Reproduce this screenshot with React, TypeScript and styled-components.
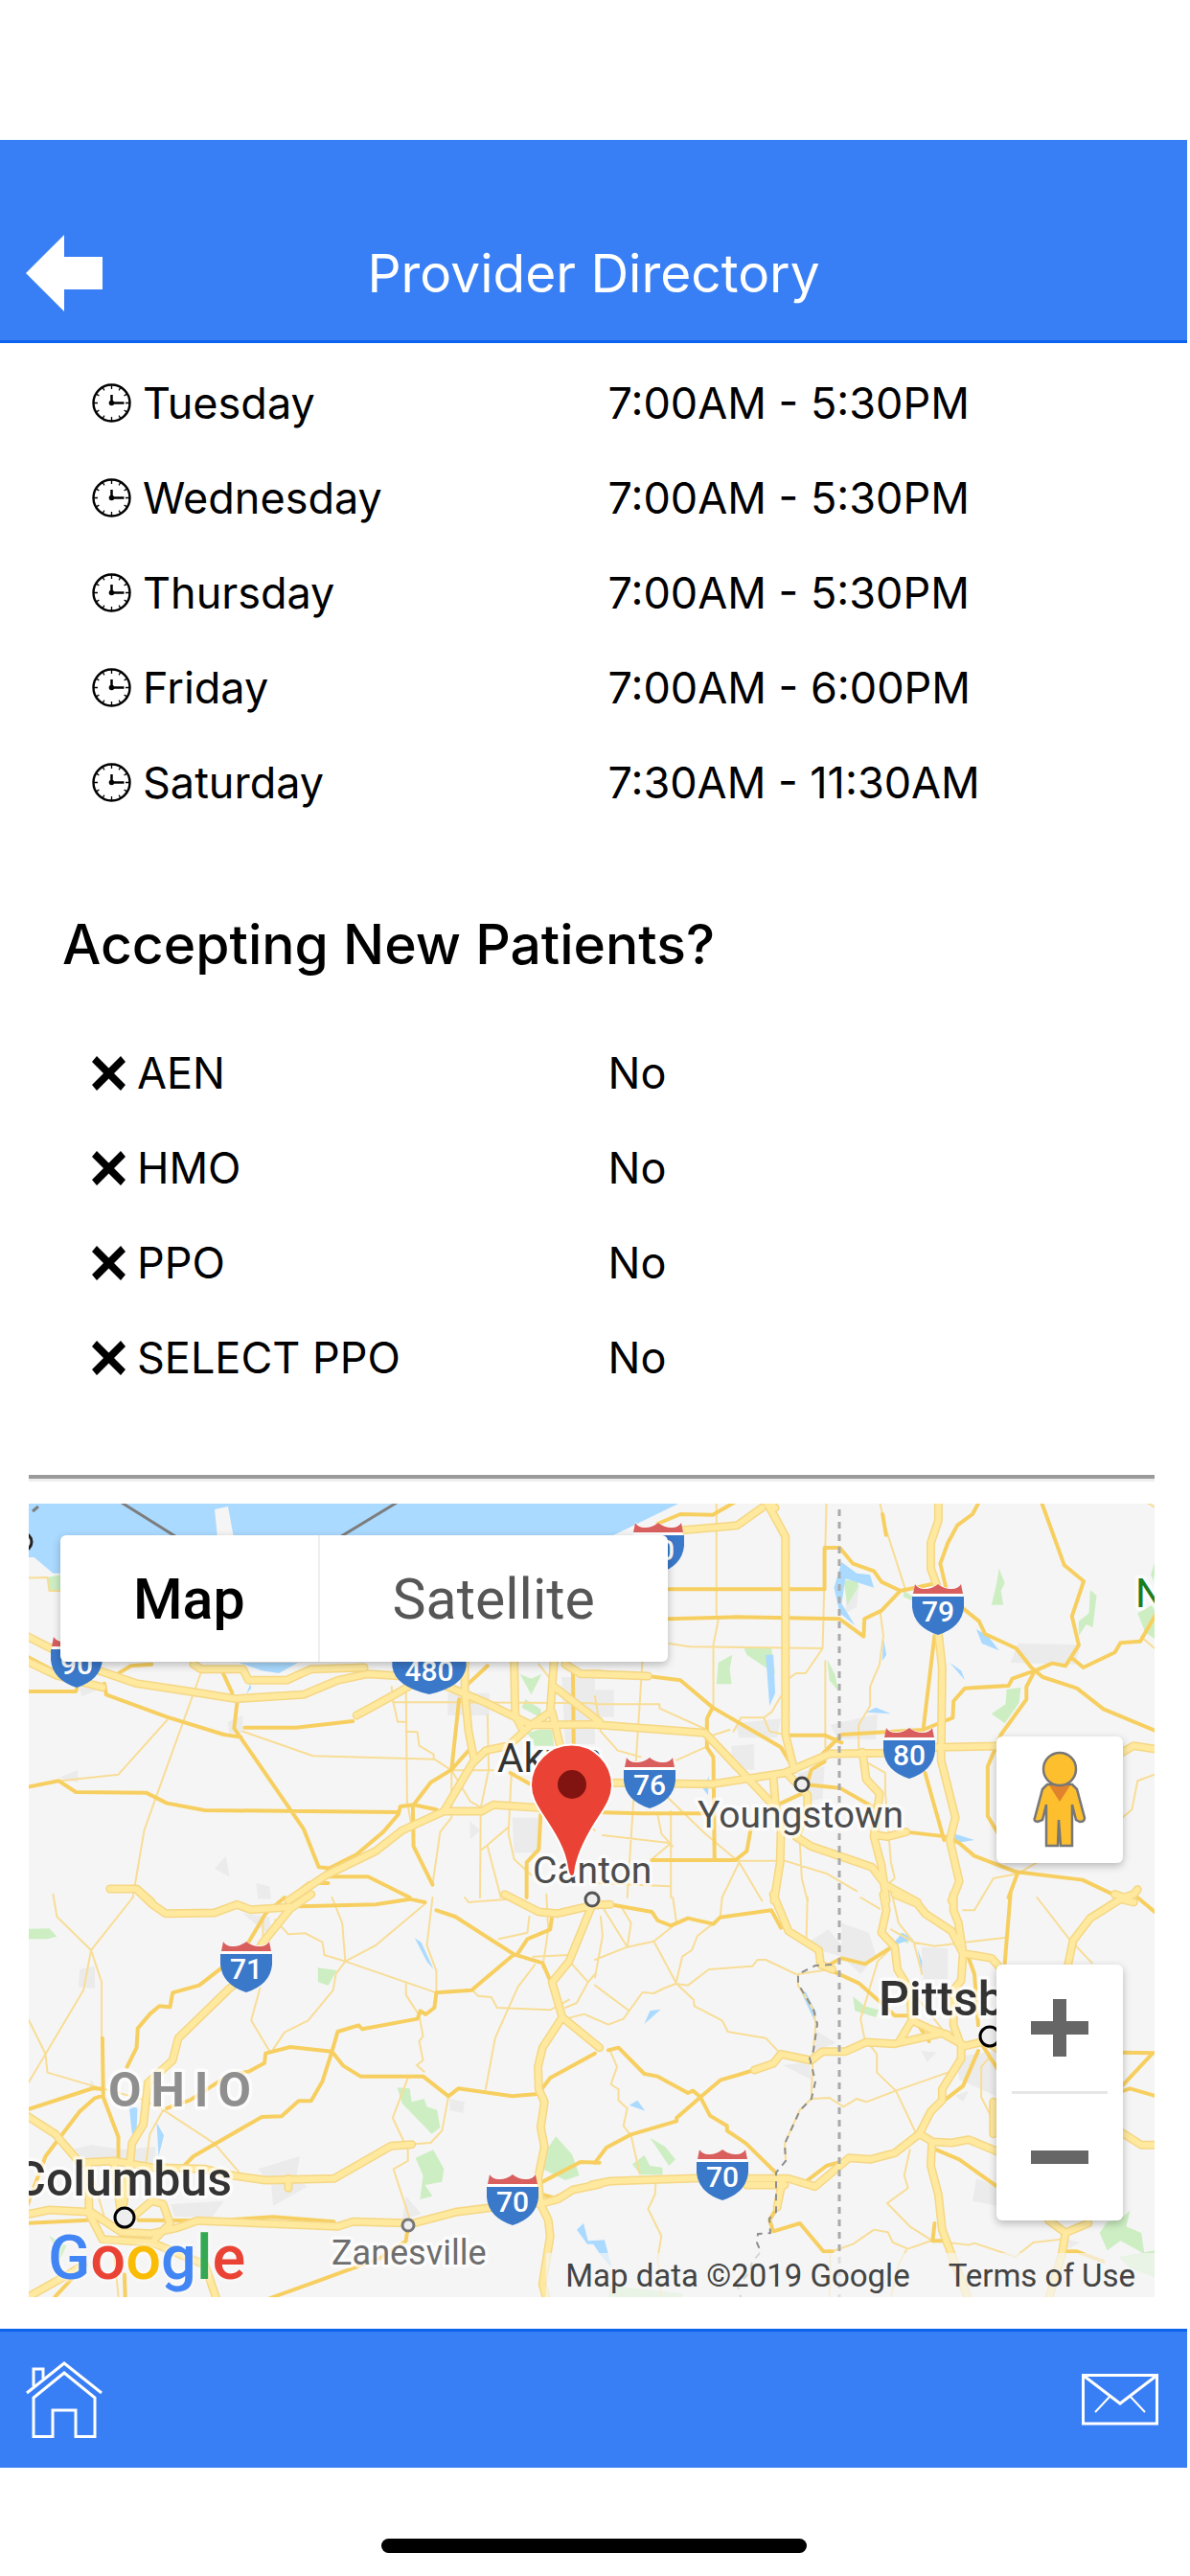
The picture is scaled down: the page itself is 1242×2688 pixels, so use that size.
import React, { memo, ReactElement, useState } from 'react';
import styled, { createGlobalStyle } from 'styled-components';

const HOURS = [
  { day: 'Tuesday', time: '7:00AM - 5:30PM' },
  { day: 'Wednesday', time: '7:00AM - 5:30PM' },
  { day: 'Thursday', time: '7:00AM - 5:30PM' },
  { day: 'Friday', time: '7:00AM - 6:00PM' },
  { day: 'Saturday', time: '7:30AM - 11:30AM' },
];

const PLANS = [
  { name: 'AEN', accepting: false },
  { name: 'HMO', accepting: false },
  { name: 'PPO', accepting: false },
  { name: 'SELECT PPO', accepting: false },
];

interface Tile {
  transform: string;
  water: string;
  park: string;
  urban: string;
  minor: string;
  primary: string;
  motorway: string;
}

// The base map is four tiles, every tile has its own coordinate space
const TILES: Tile[] = [
  {
    transform: 'matrix(0.396 0 0 0.3333 -30 -9)',
    water:
      'M70 20H1580V180H160V245H140L90 195H70Z M630 525H785L735 558L690 550Z M660 590L662 605L650 622Z',
    park:
      'M125 258L160 250V300H132Z M1370 560L1400 575L1428 560L1400 625Z M1385 640L1425 670L1428 700L1375 665Z M1390 745L1420 735H1455L1460 785H1410Z',
    urban:
      'M155 885L205 860V900Z M565 1170L595 1130L605 1195Z M675 1215L710 1225L715 1265H680Z M1180 620H1290V690H1180Z M600 710L640 690V745H605Z M1350 1010H1420V1120H1355Z M1238 1020L1265 1050L1240 1078Z M1480 570H1568V780H1490Z M210 600L260 610L215 630Z',
    minor:
      'M530 555L410 950L380 1050L350 1260 M440 705L312 875L160 895 M640 740L825 817L1145 827L1190 862H1300 M1070 600L1073 960L1087 1050 M1032 600L1035 640L1048 710H1070 M1070 740L1100 742L1105 785L1143 812V827 M1035 648L1568 652 M1285 690L1288 860L1267 980L1265 1260 M1190 862V1010L1160 1055L1140 1220 M1190 862L1240 960L1270 980 M1348 870L1340 1060L1355 1140L1400 1190 M1340 1040L1270 1110 M1285 1100L1320 1260 M70 260L125 258L130 300H160 M1420 530L1500 650L1568 700 M1500 990L1568 1050',
    primary:
      'M70 505L150 555 M70 615H200L205 595 M275 590L280 625L440 695L590 750L635 758 M625 650L617 730L800 1045L840 1165L880 1170 M585 550L612 620 M645 728H780L930 708 M70 915L155 895L200 930L385 932L440 965L540 987L1050 993 M1210 640L1190 860L1135 900L1090 970L1150 985 M1235 800L1190 860 M1090 970L1055 975L1050 1000L1010 1055L940 1125L865 1170L860 1195L970 1195L1080 1260 M1088 970L1090 1100L1140 1220 M1510 540L1512 780 M1425 1000L1420 1110L1388 1150V1260 M310 560L345 535L400 530 M760 1265L815 1215H865 M1235 590L1285 535 M1345 870L1420 920',
    motorway:
      'M60 435L150 490L250 545L360 590L500 615L620 638L800 625L890 580L970 560L1100 570 M70 520L150 565L270 602 M510 530L530 545H640L655 580H755L820 545L960 540 M940 690L1040 625L1090 590L1220 560 M1180 600L1280 650L1400 720L1580 718 M1225 520V620L1235 740L1250 830L1170 990L1060 1050L990 1115L860 1190L760 1270 M1170 990H1270L1300 970L1430 980 M1355 520L1358 690L1375 730 M1460 520L1450 680L1400 720L1340 785L1280 800L1245 840 M1460 600L1580 710 M1490 530L1530 560H1580 M1455 680L1475 780 M290 1233H360L400 1275',
  },
  {
    transform: 'matrix(0.396 0 0 0.3333 591 -9)',
    water:
      'M-10 20H232L50 125L-10 180Z M650 210L690 245L725 250L735 290L660 262L650 340L685 408L645 370L630 290Z M450 500H470L475 620L460 660Z M1005 420L1035 440L1065 487L1020 465Z M935 525L965 550L975 580Z M760 450L768 500L757 520Z M715 680L740 665L780 685Z M945 1060L1000 1080L950 1090Z M285 920L300 880L298 940Z',
    park:
      'M393 480H465L475 560L400 500Z M325 525L362 500L355 545L360 592H320Z M612 515L632 560L642 615L618 580Z M1065 230L1080 275L1070 300L1076 344H1045L1058 280Z M1305 297L1322 315L1312 415L1295 405L1275 440V395L1302 370Z M1085 608L1122 603L1118 650L1080 715L1045 685L1082 655Z M1475 210L1465 250L1475 280Z M1430 370L1475 340V450L1450 430Z M655 265L690 270L695 285L665 345Z M815 300L840 320L835 330L812 318Z',
    urban:
      'M665 285H695L690 350L660 370Z M1095 525L1115 465L1280 468L1265 530Z M620 720L745 685L740 765H640Z M360 785L420 780V860H360Z M370 715L490 700L480 760H380Z M0 610H50V695H0Z M535 870L605 850L600 950L560 960Z',
    minor:
      'M320 20V380L325 390L312 470V660 M610 20L600 480L555 558H530L505 580 M195 465L250 475L600 480 M607 520V790 M752 370L760 440L750 530L725 600V660L695 720V800 M125 520L85 1260 M0 655H170V668L295 735 M365 740L385 697H445L460 740L500 750 M200 990V1260 M20 1065L200 1090L150 1140 M380 1150L335 1260 M380 1150L440 1270 M500 1145L610 1185L690 1240 M540 1090L545 1200L560 1270 M1475 875L1430 895L1415 985L1390 1010 M1450 20L1475 38 M1440 445L1475 480 M290 790L215 830 M750 20L765 100L818 295 M720 840L765 870V930L780 1150L790 1200L760 1230 M165 1000L175 1060L205 1100 M190 945L290 1060L380 1150 M0 630L15 740L60 800L120 820 M1165 1150L1115 1185L1050 1200L1020 1260 M0 1215L200 1225 M490 630L465 680L445 697 M355 735L290 760 M370 1145H500',
    primary:
      'M165 90L225 60L310 62L372 20 M195 295H605V165H645L680 215L735 238L755 272L805 300L885 280 M195 388L370 382L645 388L708 443L710 388L755 362L805 300 M1013 20L995 60L955 95L930 150L910 215L925 290 M758 60L767 125 M1176 20L1237 220L1288 270L1257 380L1275 470L1240 535L1205 527L1170 545L1100 575L1090 597L975 605L945 645L943 697L865 735L650 750L600 810L605 835L570 860L560 900 M970 355L1012 395L1028 435L1110 480L1150 540L1180 570L1270 605L1340 670L1475 737 M1257 510L1287 540L1370 493L1385 463L1437 458L1480 370 M1155 560L1137 600V640L1070 750L1035 850V1005L1065 1065 M140 567L225 580L310 665L490 790L520 850 M310 665L295 700V790L312 820L315 1140 M505 752H605L650 775 M895 440L865 735 M870 870L920 1080 M545 905L645 917L745 985 M820 1055L930 1070L960 1090L1000 1130L1110 1180L1285 1205L1400 1270 M0 993L120 997H290 M150 1143H370L400 1115L410 1050 M1115 1180L1090 1260 M490 965L545 935',
    motorway:
      'M450 20L470 60L502 130V750L525 860 M440 40L375 95L230 110L130 160 M-10 560L140 567 M-10 718L290 745L465 965 M-10 900L310 905L500 870L620 810L770 808L900 790L1100 785 M1380 812L1420 785L1485 797 M905 20V80L885 150V230L900 280 M905 430L915 540L912 830L950 1010L935 1080L960 1210L940 1270 M470 880L475 960L490 1050L488 1150L472 1270 M505 870L560 940V980L530 1070L570 1100L730 1165L765 1220L850 1275 M705 805L715 890L750 935L735 1070L755 1160L768 1270 M745 1065L770 1070L820 1055 M455 25L475 40 M1370 1250L1395 1260L1420 1250L1430 1235',
  },
  {
    transform: 'matrix(0.396 0 0 0.3333 -30 411)',
    water:
      'M340 650L362 660L360 730L348 740Z M413 705L432 745L418 810Z M1093 127L1110 140L1143 225L1125 200Z M1520 1040L1538 1020L1550 1075L1568 1075V1085H1548Z',
    park:
      'M70 98L130 97L150 122L125 130H70Z M838 220L888 228L865 275L838 265Z M1047 595L1080 598L1085 640L1118 630L1125 655L1152 665L1160 720L1138 740L1060 645Z M1095 815L1142 790L1170 850L1165 890L1120 900L1140 935L1107 945L1115 870Z M1465 748L1508 805L1527 870L1490 885L1430 850L1435 800Z M130 1060L175 1090L160 1130Z',
    urban:
      'M210 225L250 215V285L207 280Z M640 50L710 60L715 120L680 90Z M790 810L780 880L810 905L720 965L715 900L680 850Z M185 790L240 775L330 790L410 780V830H220Z M450 960L590 950L560 1000H460Z M1185 630L1225 640L1220 675L1185 665Z M1070 935L1110 990L1060 1010Z M240 570L250 590L235 600Z',
    minor:
      'M140 -10L150 60L240 165L268 265V440 M350 0L240 165L220 290L120 490L70 590 M70 370L120 490L125 548L245 590L370 630L430 665L565 770L630 860 M430 665L395 740L385 830 M725 70L760 115L805 112L850 140L855 180L910 200L1150 298 M875 0L902 80L910 200L885 240L878 290L812 385L750 422L720 475 M1120 20L990 150L910 200 M685 285L662 385L710 480 M1140 0L1125 150L1150 230V298 M1070 270V305L1105 370L1115 435L1105 450L1115 510L1098 525L1118 545 M1075 565L1035 690L1075 790V825L1037 850L1078 1000 M1182 622L1165 730L1135 768L1090 772 M1410 210L1365 280L1305 440L1280 600 M1245 290L1260 308L1295 312L1310 345L1450 352L1500 320 M1395 60L1390 110L1315 130 M1405 185L1500 180 M1440 -10L1445 100L1430 220 M1490 380L1540 365L1568 380 M1505 205L1550 265L1520 330L1490 345 M1550 265L1568 240 M300 1100L312 1250 M245 880L275 1000 M693 60V120 M1225 0L1235 15L1340 5',
    primary:
      'M790 28L990 22L1080 5L1120 15 M750 0L700 50L655 140 M590 215L525 275L455 298L448 343L420 340L395 365L363 410L360 470L335 530 M440 660L500 635L605 555L655 545L697 518L700 488L765 468L875 482L890 420L945 400L955 412L1100 380L1108 355L1122 366L1145 345L1150 298L1243 290L1355 178L1200 60L1150 40 M1355 178L1430 205L1450 260 M1365 175L1390 130L1450 100L1455 60 M875 482L905 527L950 560H1115L1182 622L1208 598L1350 622L1418 615L1450 565L1568 488 M875 482L850 575L820 637H787L742 685L690 687L510 810L485 840 M70 665L245 597L272 600L270 440 M272 620L250 628L210 670L120 810L70 970 M272 600V625L312 750V820 M365 1010L560 1012L720 1000L880 1015 M1075 1030L1070 1075L1000 1130L840 1200L710 1255 M1430 890L1530 828L1580 830 M1430 930L1460 940L1490 925 M70 1020L230 1010 M145 1250L200 1180 M328 1180L330 1250',
    motorway:
      'M365 -20L400 20L437 50L565 48L625 22L660 38L765 30 M820 -10L765 35L690 145L650 240L600 290L470 440L455 510L390 580L378 710L348 770L342 840 M60 675L145 740L210 830L300 825L400 845L540 850L620 872L700 885L880 880L1030 778L1085 773 M760 880V910 M60 995L130 978L240 985L320 1048L400 1052L465 1035L520 1012L890 1030L930 1015L1090 1020L1200 985L1300 970 M1420 960L1470 945L1510 915L1580 898 M232 840L235 990L270 1070L400 1080L448 1020L430 960L400 950L340 1010 M60 1260L180 1180L220 1150 M400 1080L540 1150L570 1255 M1330 -10L1420 45L1470 50L1560 25L1500 200L1455 265L1482 375L1430 470L1418 530L1420 600L1435 640L1425 720L1435 780L1418 880L1425 960L1445 1010L1450 1060L1430 1210L1440 1255 M320 1000L300 830 M340 840L325 960 M1482 375L1580 470',
  },
  {
    transform: 'matrix(0.396 0 0 0.3333 591 411)',
    water:
      'M130 395L145 355L173 350L150 375Z M90 650L112 635L132 668Z M-10 1075L25 1072L45 1160L15 1120Z M545 300L555 295L583 360L580 390Z M760 180L810 110L838 130L800 145Z M850 160L862 200V240Z',
    park:
      'M145 752L185 780L212 820L195 840Z M98 835L130 807L145 840L178 845V868H120Z M680 310L710 340L748 352L740 375L685 355Z M1410 980L1400 1030L1440 1050L1448 1115L1385 1075L1350 1105L1330 1050L1350 1015L1380 1010Z M1380 1125L1475 1105V1190L1410 1160Z M40 1215L230 1240V1255H35Z M805 110L830 120L825 145L800 130Z',
    urban:
      'M550 150L615 100L650 150V80L722 110L740 180L700 240L650 185Z M860 155L930 160V255H865Z M495 525L565 515L570 570Z M580 415L635 455L580 480Z M860 480L900 485L875 515Z M950 500L1055 480V620L960 570Z M1005 880L1060 900V965L995 950Z M950 620L985 605L970 640Z M1245 1070L1280 1080L1245 1100Z',
    minor:
      'M15 60L20 120L0 250 M20 30L85 155L155 137L205 90 M85 155L0 195 M70 30L95 80L85 155 M155 137L215 270L260 320L262 340L335 385L350 420L450 440L490 490 M205 0L215 80 M335 0L330 60 M310 83L270 120L255 165L230 185L213 270L180 285L155 300L125 297L75 380L35 398L0 380 M213 270L245 275L300 225L415 215L428 195H450L530 240 M560 0L557 130 M0 275L90 355 M40 480L58 530L42 585L62 600V635L85 660L75 715L95 745L118 865 M160 895L158 930L140 975L175 1060L165 1130L175 1250 M775 165L745 200L700 380L710 440L743 490V548L793 605L845 735 M575 630L618 627L655 655L690 630L715 640L793 605L930 548 M830 790L815 870L825 910L770 957L830 1030L890 1075 M625 1108L680 1085L735 1040L772 1048L785 1080L825 1100L885 1075 M915 1078L985 1088L1000 1082L1108 1125L1155 1080L1230 1070 M1165 0L1250 130L1310 205 M780 100L840 140L895 152L1085 125 M1040 500L1018 530V625L1050 700 M840 140L862 240 M620 1108L618 1250 M620 225L535 240V275L575 350L582 395L575 480L570 630L540 665L500 770L503 825 M820 1105L800 1150L780 1250 M785 0L800 80L840 140 M700 0L750 35 M970 40H1000L1020 0 M840 300L920 420',
    primary:
      'M40 22L150 45L165 72L200 88L245 65L312 83L330 62L465 40L490 95 M610 215L650 190L712 208L775 160 M625 230L695 268L745 320L790 370H830 M35 478L62 470L130 552L165 560L245 612L258 605L278 625L330 572L420 540 M278 625L215 690V700L95 742L30 783L0 830 M278 625L303 683L348 715V730L398 770L475 860 M480 970L460 1010L470 1045L540 1020L602 1108H625 M555 890L610 840L640 830 M1095 -10L1080 205 M985 190L1000 240L1010 400 M1010 480L970 590L915 640 M1020 460L1060 535 M890 785L960 820L1060 905 M1380 485L1475 487 M1470 487L1385 595 M1380 610L1410 598L1480 622 M1430 0L1475 45 M895 1020L890 1075H915 M1240 1108H1270L1340 1140 M850 395L880 450',
    motorway:
      'M-10 24L40 22 M470 -10L510 105L590 165L595 210L625 225 M760 -10L768 40L755 110L790 155L797 225L830 290L835 385L800 455 M790 -10L850 20L870 50L940 105L970 175L965 260L945 290V400L965 465 M945 -10V40L958 80L970 175L1045 190L1075 230 M1420 15L1385 5L1305 65L1260 135L1245 220 M420 540L470 520L490 490L570 510L600 482H660L715 453L790 458L915 425L975 465L1030 450L1070 480 M965 465V505L915 600V635L885 670L855 740L790 800L725 820L670 815L580 905L510 880H400 M400 900H500 M-10 900L40 888L280 878 M855 740L890 765L940 768L985 758L1070 800 M888 770L885 840L905 930L915 1040L985 1260 M835 385L880 410L930 430 M495 880L480 970 M1195 1010L1240 1050L1300 1020 M1240 1050L1230 1120L1195 1260 M1380 730L1440 775H1485 M1050 640V740',
  },
];

const STATE_LINES = [
  'M846 6V828',
  'M838 481L821 482L803 491V501L819 528L823 543L819 571L815 578L821 603L817 621L805 633L789 668L790 686L780 698V739L773 746L774 761L761 762L760 771L764 781L755 791L753 801L740 816L743 828',
];

const SHIELDS = [
  { x: 50, y: 165, route: '90' },
  { x: 418, y: 172, route: '480', wide: true },
  { x: 657, y: 46, route: '90' },
  { x: 949, y: 110, route: '79' },
  { x: 919, y: 260, route: '80' },
  { x: 648, y: 291, route: '76' },
  { x: 227, y: 483, route: '71' },
  { x: 505, y: 726, route: '70' },
  { x: 724, y: 700, route: '70' },
];

const CITY_DOTS = [
  { x: -6, y: 40, r: 9, stroke: '#222' },
  { x: 588, y: 413, r: 7, stroke: '#555' },
  { x: 807, y: 293, r: 7, stroke: '#444' },
  { x: 396, y: 753, r: 6, stroke: '#777' },
  { x: 100, y: 745, r: 10, stroke: '#000' },
  { x: 1003, y: 556, r: 10, stroke: '#000' },
];

const ClockIcon = memo(
  (): ReactElement => (
    <svg width="41" height="41" viewBox="0 0 41 41" aria-hidden="true">
      <circle cx="20.5" cy="20.5" r="19" fill="none" stroke="#000" strokeWidth="2.4" />
      <path
        d="M20.5 2v4M20.5 35v4M2 20.5h4M35 20.500h4M11.400 4.800l1.500 2.600M28.100 33.600l1.500 2.600M4.800 11.400l2.600 1.500M33.600 28.100l2.600 1.500M4.800 29.600l2.600-1.500M33.600 12.900l2.600-1.500M11.400 36.200l1.500-2.600M28.100 7.400l1.500-2.600"
        stroke="#000"
        strokeWidth="1.3"
      />
      <path d="M20.5 12v8.5H33.500" fill="none" stroke="#000" strokeWidth="2.5" />
      <circle cx="20.5" cy="20.5" r="2.8" />
    </svg>
  ),
);

const CrossIcon = memo(
  (): ReactElement => (
    <svg width="35" height="36" viewBox="0 0 35 36" aria-hidden="true">
      <path
        d="M5 0L17.500 12.500L30 0L35 6L23 18L35 30L30 36L17.500 23.500L5 36L0 30L12 18L0 6Z"
        fill="#000"
      />
    </svg>
  ),
);

const InterstateShield = ({
  x,
  y,
  route,
  wide,
}: {
  x: number;
  y: number;
  route: string;
  wide?: boolean;
}): ReactElement => (
  <g transform={`translate(${x} ${y})`}>
    <g transform={wide ? 'scale(1.43 1)' : undefined}>
      <path
        d="M-24-27Q-20-21-13-22Q-6-22 0-26Q6-22 13-22Q20-21 24-27L26-12Q29 17 0 27Q-29 17-26-12Z"
        fill="#fff"
      />
      <path
        d="M-24-26Q-21-21-14-21Q-6-21 0-26Q6-21 14-21Q21-21 24-26L26-16H-26Z"
        fill="#d95f5f"
      />
      <path d="M-27-13H27V-2Q25 19 0 27Q-25 19-27-2Z" fill="#3a78c9" />
    </g>
    <ShieldText y={13}>{route}</ShieldText>
  </g>
);

const BaseMap = memo(
  (): ReactElement => (
    <MapCanvas
      viewBox="0 0 1175 828"
      preserveAspectRatio="xMidYMid slice"
      role="img"
      aria-label="Map of the area around Canton, Ohio"
    >
      <rect width="1175" height="828" fill="#f5f5f5" />
      {TILES.map(tile => (
        <g key={tile.transform} transform={tile.transform}>
          <path d={tile.urban} fill="#ebebeb" />
          <path d={tile.park} fill="#cdeec2" />
          <path d={tile.water} fill="#aadaff" />
        </g>
      ))}
      <path d="M194 6L208 3L214 36H197Z" fill="#f5f5f5" />
      <path d="M97-1L156 36M384-1L323 36M4 8L10 3" stroke="#7d7d7d" strokeWidth="3" />
      {TILES.map(tile => (
        <g key={tile.transform} transform={tile.transform}>
          <Road d={tile.minor} stroke="#f8dd96" strokeWidth={2} />
          <Road d={tile.primary} stroke="#f7cf60" strokeWidth={4} />
        </g>
      ))}
      {TILES.map(tile => (
        <g key={tile.transform} transform={tile.transform}>
          <Road d={tile.motorway} stroke="#f5d784" strokeWidth={9} />
        </g>
      ))}
      {TILES.map(tile => (
        <g key={tile.transform} transform={tile.transform}>
          <Road d={tile.motorway} stroke="#ffe99f" strokeWidth={6} />
        </g>
      ))}
      {STATE_LINES.map((d, i) => (
        <path
          key={d}
          d={d}
          fill="none"
          stroke={i === 0 ? '#aaa' : '#8e8e8e'}
          strokeWidth={i === 0 ? 3 : 2}
          strokeDasharray="7 6"
        />
      ))}
      {SHIELDS.map(shield => (
        <InterstateShield key={`${shield.x}-${shield.y}`} {...shield} />
      ))}
      {CITY_DOTS.map(dot => (
        <circle
          key={dot.x}
          cx={dot.x}
          cy={dot.y}
          r={dot.r}
          fill="#eee"
          stroke={dot.stroke}
          strokeWidth="3"
        />
      ))}
      <PlaceName x="489" y="280" fontSize={42} fill="#333">
        Akron
      </PlaceName>
      <PlaceName x="526" y="396" fontSize={39} fill="#4c4c4c">
        Canton
      </PlaceName>
      <PlaceName x="698" y="338" fontSize={39} fill="#4c4c4c">
        Youngstown
      </PlaceName>
      <PlaceName x="316" y="794" fontSize={36} fill="#6e6e6e">
        Zanesville
      </PlaceName>
      <PlaceName x="212" y="722" fontSize={50} fill="#333" fontWeight={500} textAnchor="end">
        Columbus
      </PlaceName>
      <PlaceName x="887" y="534" fontSize={50} fill="#333" fontWeight={500}>
        Pittsburgh
      </PlaceName>
      <PlaceName x="1155" y="108" fontSize={42} fill="#1c7d1c">
        N
      </PlaceName>
      <StateName x="83" y="629">
        OHIO
      </StateName>
      <path
        d="M567 389C563 389 563 384 562 379C559 360 549 344 537 326C529 314 524 305 524 294A42.500 42.500 0 0 1 609 294C609 305 604 314 596 326C584 344 575 360 571 379C570 384 571 389 567 389Z"
        fill="#ea4335"
        stroke="#fff"
        strokeWidth="2"
      />
      <circle cx="567" cy="293" r="15" fill="#811411" />
    </MapCanvas>
  ),
);

const ProviderMap = (): ReactElement => {
  const [mapType, setMapType] = useState('Map');

  return (
    <MapFrame>
      <BaseMap />
      <MapTypes>
        {['Map', 'Satellite'].map(type => (
          <MapTypeButton
            key={type}
            type="button"
            $selected={mapType === type}
            onClick={() => setMapType(type)}
          >
            {type}
          </MapTypeButton>
        ))}
      </MapTypes>
      <MapControls>
        <ControlButton type="button" aria-label="Street View">
          <svg width="58" height="102" viewBox="0 0 58 102">
            <path
              d="M16 35H42L47 40L55 70Q55 74 50 74L46 72L42 56V99H30L28 72L27 99H15V56L11 72L6 74Q1 73 3 70L11 40Z"
              fill="#fdbf2d"
              stroke="#777"
              strokeWidth="2.5"
            />
            <path d="M18 36H40L29 53Z" fill="#e1822d" />
            <circle cx="29" cy="19" r="17" fill="#fdbf2d" stroke="#777" strokeWidth="2.5" />
          </svg>
        </ControlButton>
        <ZoomGroup>
          <ControlButton type="button" aria-label="Zoom in">
            <svg width="60" height="60" viewBox="0 0 60 60">
              <path d="M23 0H37V23H60V37H37V60H23V37H0V23H23Z" fill="#666" />
            </svg>
          </ControlButton>
          <ZoomDivider />
          <ControlButton type="button" aria-label="Zoom out">
            <svg width="60" height="14" viewBox="0 0 60 14">
              <path d="M0 0H60V14H0Z" fill="#666" />
            </svg>
          </ControlButton>
        </ZoomGroup>
      </MapControls>
      <GoogleLogo href="#google" aria-label="Google">
        <Letter $color="#4285f4">G</Letter>
        <Letter $color="#ea4335">o</Letter>
        <Letter $color="#fbbc05">o</Letter>
        <Letter $color="#4285f4">g</Letter>
        <Letter $color="#34a853">l</Letter>
        <Letter $color="#ea4335">e</Letter>
      </GoogleLogo>
      <Attribution>
        <span>Map data ©2019 Google</span>
        <a href="#terms">Terms of Use</a>
      </Attribution>
    </MapFrame>
  );
};

const App = (): ReactElement => (
  <Page>
    <GlobalStyle />
    <Header>
      <BarButton type="button" aria-label="Back">
        <svg width="80" height="80" viewBox="0 0 80 80">
          <path d="M0 40L40 0V23H80V57H40V80Z" fill="#fff" />
        </svg>
      </BarButton>
      <Title>Provider Directory</Title>
    </Header>
    <main>
      <InfoTable aria-label="Office hours">
        <tbody>
          {HOURS.map(({ day, time }) => (
            <tr key={day}>
              <th scope="row">
                <RowLabel>
                  <ClockIcon />
                  {day}
                </RowLabel>
              </th>
              <td>{time}</td>
            </tr>
          ))}
        </tbody>
      </InfoTable>
      <SectionTitle>Accepting New Patients?</SectionTitle>
      <InfoTable aria-label="Accepting new patients">
        <tbody>
          {PLANS.map(({ name, accepting }) => (
            <tr key={name}>
              <th scope="row">
                <RowLabel>
                  <CrossIcon />
                  {name}
                </RowLabel>
              </th>
              <td>{accepting ? 'Yes' : 'No'}</td>
            </tr>
          ))}
        </tbody>
      </InfoTable>
      <Divider />
      <ProviderMap />
    </main>
    <Footer>
      <BarButton type="button" aria-label="Home">
        <svg width="80" height="80" viewBox="0 0 80 80" fill="none" stroke="#fff" strokeWidth="3">
          <path d="M1 33L40 2L79 33" />
          <path d="M8 26V8H18V18" />
          <path d="M8 38L40 12L72 38V78.500H52V51H28V78.500H8Z" />
        </svg>
      </BarButton>
      <BarButton type="button" aria-label="Mail">
        <svg width="80" height="54" viewBox="0 0 80 54" fill="none" stroke="#fff">
          <path d="M1.500 1.500H78.500V52H1.500Z" strokeWidth="3" />
          <path d="M2 2L40 31L78 2" strokeWidth="3" />
          <path d="M29 24L14 40M51 24L66 40" strokeWidth="2" />
        </svg>
      </BarButton>
    </Footer>
    <HomeIndicator />
  </Page>
);

export default App;

const GlobalStyle = createGlobalStyle`
  body {
    background: #fff;
    color: #000;
    font-family: Inter, 'Liberation Sans', sans-serif;
    margin: 0;
  }

  * {
    box-sizing: border-box;
  }

  svg {
    display: block;
    flex-shrink: 0;
  }

  button {
    background: none;
    border: 0;
    cursor: pointer;
    font-family: inherit;
    padding: 0;
  }
`;

const Page = styled.div`
  padding: 146px 3px 24px 0;
`;

const Header = styled.header`
  align-items: center;
  background: #387ef5;
  border-bottom: 3px solid #0c63ee;
  display: grid;
  grid-template-columns: 1fr auto 1fr;
  height: 212px;
  padding: 69px 27px 0;
`;

const Title = styled.h1`
  color: #fff;
  font-size: 55px;
  font-weight: 400;
  line-height: 72px;
  margin: 0;
`;

const BarButton = styled.button`
  justify-self: start;
`;

const InfoTable = styled.table`
  border-collapse: collapse;
  font-size: 45px;
  line-height: 56px;
  margin-top: 13px;
  table-layout: fixed;
  width: 100%;

  tr {
    height: 99px;
  }

  th {
    font-weight: 400;
    padding: 0 0 0 96px;
    text-align: left;
    width: 50%;
  }

  td {
    padding: 0 0 0 15px;
  }
`;

const RowLabel = styled.span`
  align-items: center;
  display: flex;
  gap: 12px;
`;

const SectionTitle = styled.h2`
  font-size: 57px;
  font-weight: 500;
  line-height: 72px;
  margin: 84px 0 48px 65px;
`;

const Divider = styled.hr`
  border: 0;
  border-bottom: 3px solid #eee;
  border-top: 4px solid #9a9a9a;
  margin: 73px 34px 23px 30px;
`;

const MapFrame = styled.section`
  font-family: Roboto, 'Liberation Sans', sans-serif;
  height: 828px;
  margin: 0 34px 33px 30px;
  overflow: hidden;
  position: relative;
`;

const MapCanvas = styled.svg`
  height: 100%;
  width: 100%;
`;

const Road = styled.path`
  fill: none;
  stroke-linecap: round;
  stroke-linejoin: round;
  vector-effect: non-scaling-stroke;
`;

const ShieldText = styled.text`
  fill: #fff;
  font-size: 30px;
  font-weight: 500;
  text-anchor: middle;
`;

const PlaceName = styled.text`
  paint-order: stroke;
  stroke: rgba(255, 255, 255, 0.7);
  stroke-linejoin: round;
  stroke-width: 7px;
`;

const StateName = styled(PlaceName)`
  fill: #8f8f8f;
  font-size: 50px;
  font-weight: 700;
  letter-spacing: 0.2em;
`;

const MapTypes = styled.div`
  background: #fff;
  border-radius: 6px;
  box-shadow: 0 3px 8px rgba(0, 0, 0, 0.25);
  display: flex;
  height: 132px;
  left: 33px;
  position: absolute;
  top: 33px;
`;

const MapTypeButton = styled.button<{ $selected: boolean }>`
  color: ${props => (props.$selected ? '#000' : '#565656')};
  font-size: 59px;
  font-weight: ${props => (props.$selected ? 500 : 400)};
  padding: 0 76px;

  & + & {
    border-left: 2px solid #eee;
  }
`;

const MapControls = styled.div`
  bottom: 80px;
  display: flex;
  flex-direction: column;
  gap: 106px;
  position: absolute;
  right: 33px;
  width: 132px;

  > * {
    background: #fff;
    border-radius: 6px;
    box-shadow: 0 3px 8px rgba(0, 0, 0, 0.25);
  }
`;

const ControlButton = styled.button`
  align-items: center;
  display: flex;
  height: 132px;
  justify-content: center;
  width: 100%;
`;

const ZoomGroup = styled.div`
  align-items: center;
  display: flex;
  flex-direction: column;
`;

const ZoomDivider = styled.div`
  background: #e6e6e6;
  height: 3px;
  width: 100px;
`;

const GoogleLogo = styled.a`
  bottom: 5px;
  font-size: 65px;
  font-weight: 500;
  left: 20px;
  line-height: 72px;
  position: absolute;
  text-decoration: none;
  text-shadow: 0 0 6px #fff;
`;

const Letter = styled.span<{ $color: string }>`
  color: ${props => props.$color};
`;

const Attribution = styled.footer`
  align-items: center;
  background: rgba(245, 245, 245, 0.7);
  bottom: 0;
  color: #444;
  display: flex;
  font-size: 33px;
  gap: 40px;
  height: 46px;
  padding: 0 20px;
  position: absolute;
  right: 0;

  a {
    color: inherit;
    text-decoration: none;
  }
`;

const Footer = styled.footer`
  align-items: center;
  background: #387ef5;
  border-top: 3px solid #0c63ee;
  display: flex;
  height: 145px;
  justify-content: space-between;
  padding: 0 30px 0 27px;
`;

const HomeIndicator = styled.div`
  background: #000;
  border-radius: 8px;
  height: 15px;
  margin: 74px auto 0;
  width: 444px;
`;
